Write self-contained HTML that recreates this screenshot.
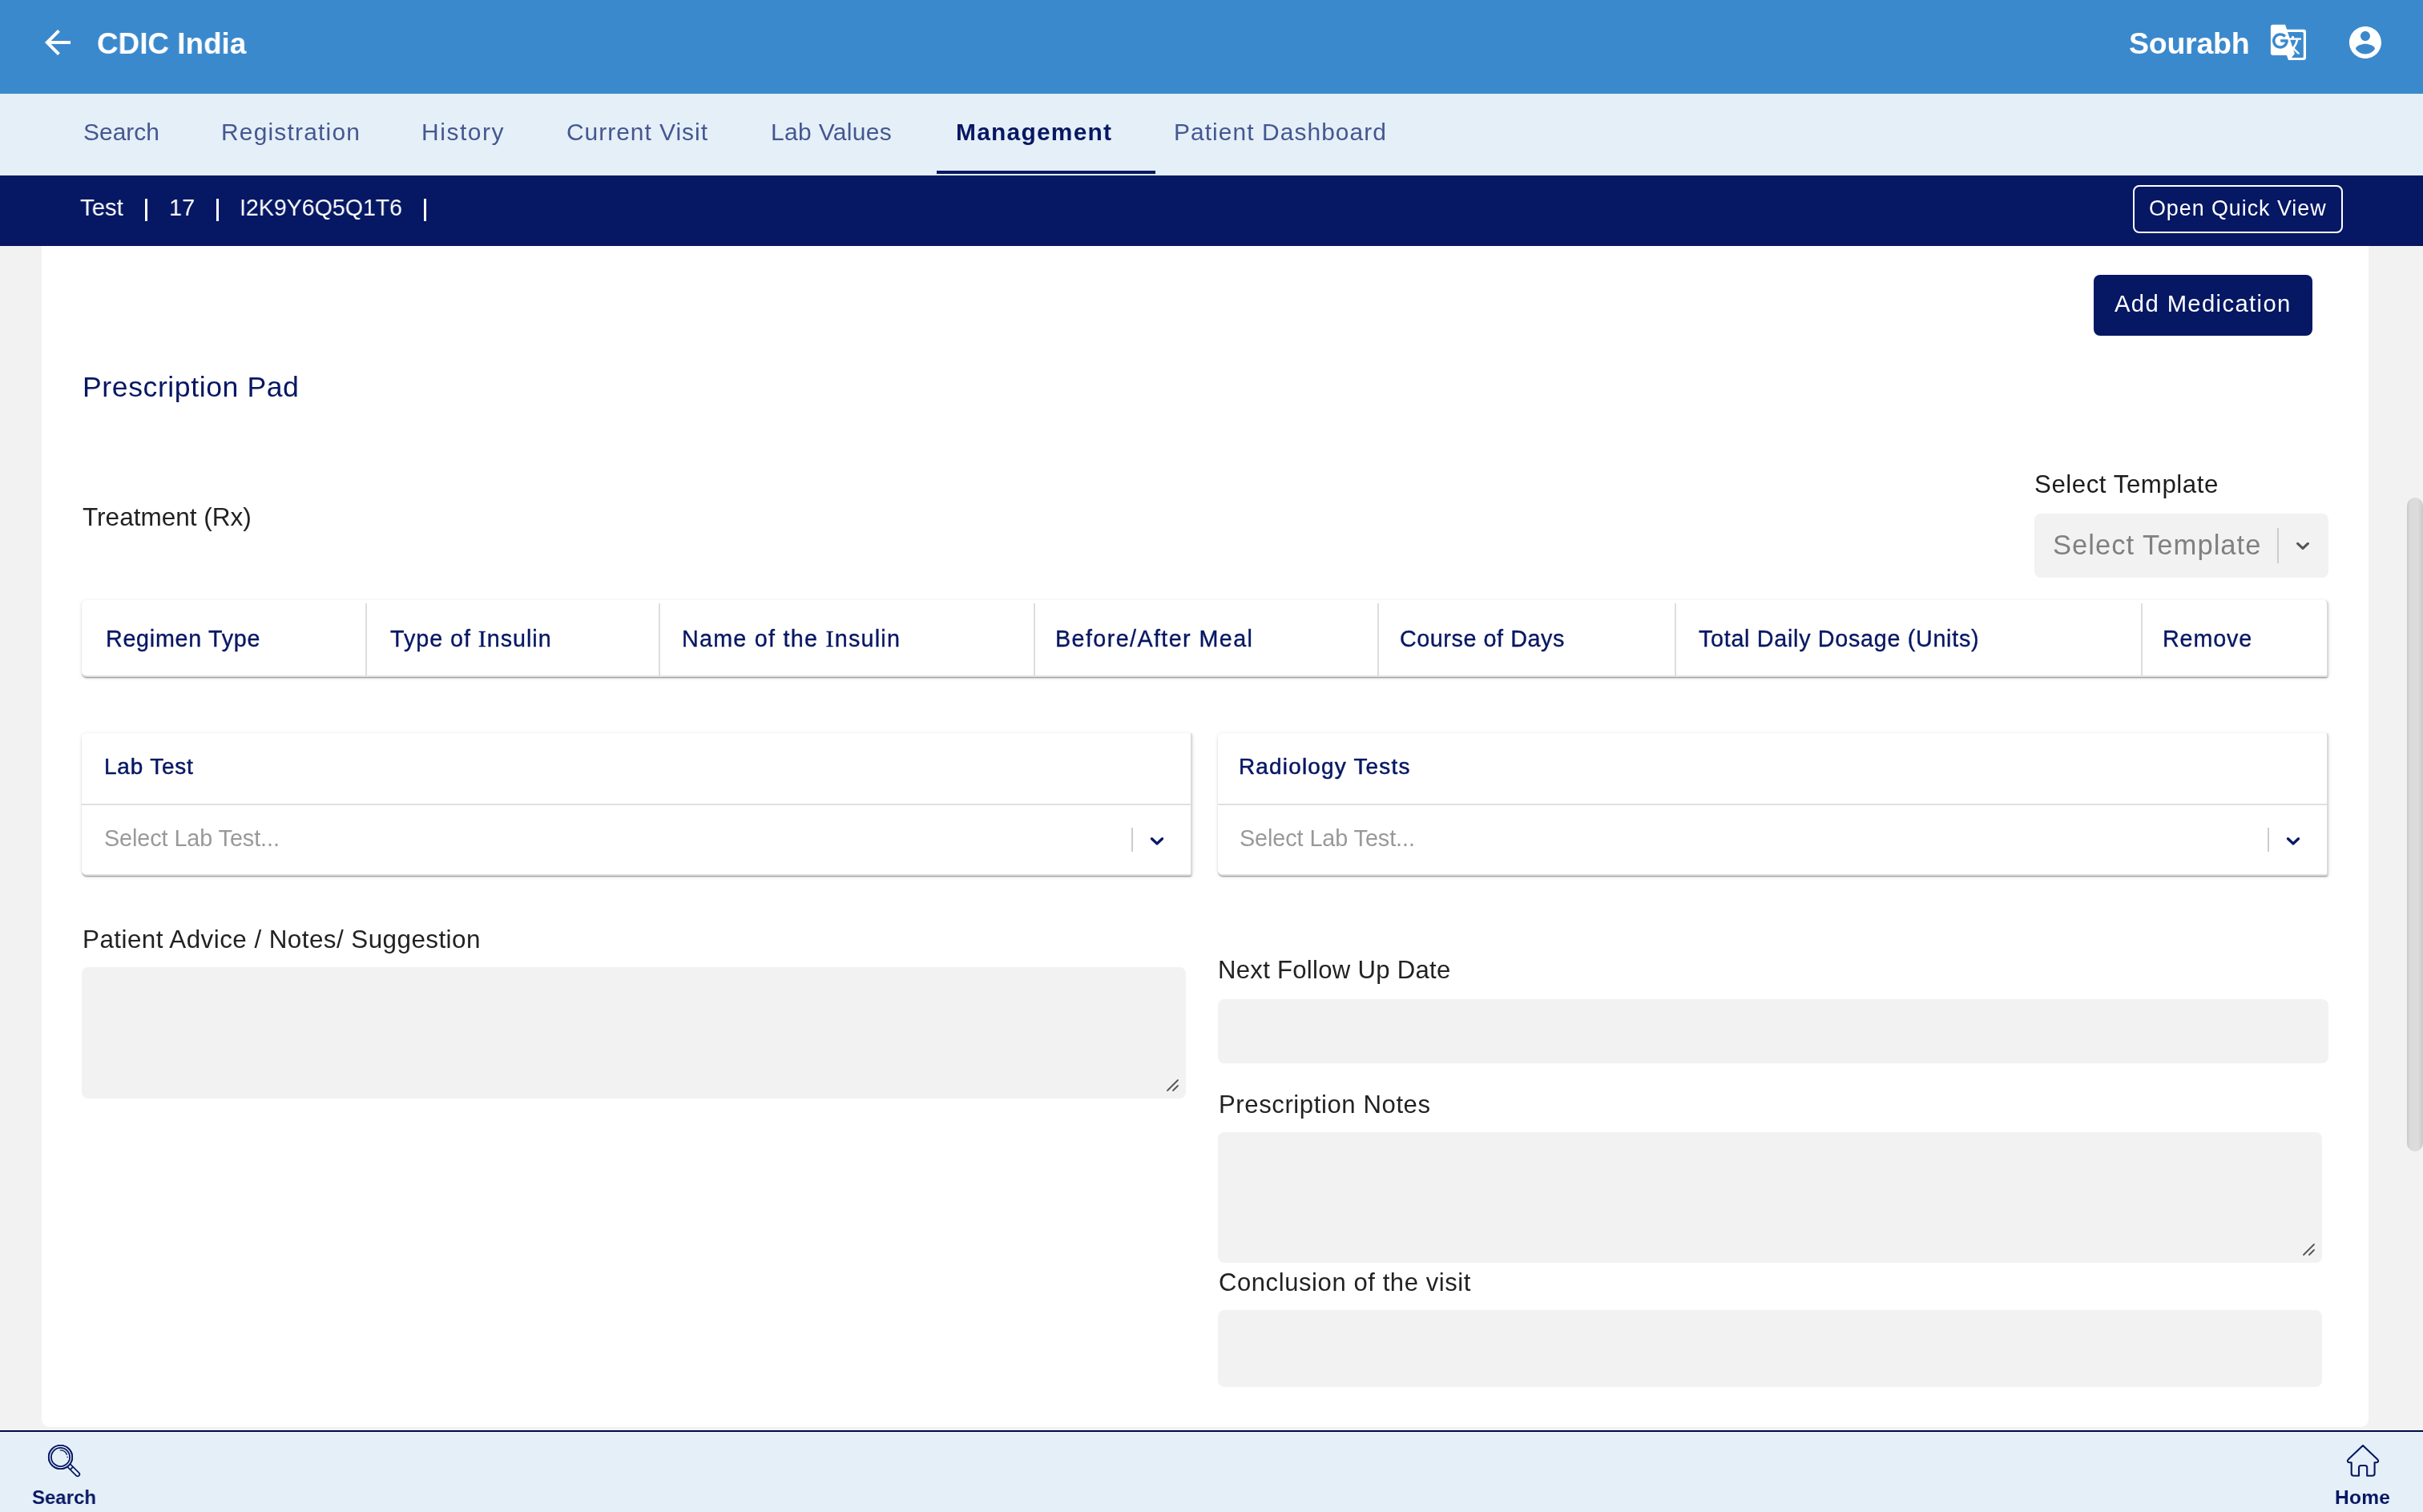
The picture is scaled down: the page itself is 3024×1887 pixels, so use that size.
<!DOCTYPE html>
<html><head><meta charset="utf-8"><title>CDIC India - Management</title>
<style>
html,body{margin:0;padding:0;width:3024px;height:1887px;overflow:hidden;background:#f2f2f2}
body{position:relative;font-family:"Liberation Sans",sans-serif}
.bx{position:absolute;box-sizing:border-box}
.tx{position:absolute;white-space:nowrap;will-change:transform}
.sI{font-family:"Liberation Serif",serif;font-size:105%;line-height:0}
</style></head><body>
<div class="bx" style="left:0px;top:0px;width:3024px;height:1887px;background:#f2f2f2"></div>
<div class="bx" style="left:52px;top:240px;width:2904px;height:1541px;background:#fff;border-radius:0 0 10px 10px"></div>
<div class="bx" style="left:3004px;top:621px;width:20px;height:816px;background:linear-gradient(90deg,#c9c9c9 0%,#dadada 20%,#dcdcdc 70%,#c9c9c9 100%);border-radius:10px"></div>
<div class="bx" style="left:0px;top:0px;width:3024px;height:117px;background:#3b89cd"></div>
<div class="bx" style="left:0px;top:117px;width:3024px;height:102px;background:#e5eff8"></div>
<div class="bx" style="left:1169px;top:213px;width:273px;height:4px;background:#061763"></div>
<div class="bx" style="left:0px;top:219px;width:3024px;height:88px;background:#061763"></div>
<div class="bx" style="left:2662px;top:231px;width:262px;height:60px;border:2px solid #fff;border-radius:8px;box-sizing:border-box"></div>
<div class="bx" style="left:181.2px;top:248px;width:3.0px;height:28px;background:#fff"></div>
<div class="bx" style="left:269.6px;top:248px;width:3.0px;height:28px;background:#fff"></div>
<div class="bx" style="left:529.0px;top:248px;width:3.0px;height:28px;background:#fff"></div>
<div class="bx" style="left:2613px;top:343px;width:273px;height:76px;background:#061763;border-radius:8px"></div>
<div class="bx" style="left:2539px;top:641px;width:367px;height:80px;background:#f2f2f2;border-radius:8px"></div>
<div class="bx" style="left:2842px;top:659px;width:2px;height:44px;background:#cccccc"></div>
<svg class="bx" style="left:2862px;top:672px" width="24" height="20" viewBox="0 0 24 20"><path d="M5.6 6.4 L12 12.4 L18.4 6.4" fill="none" stroke="#555" stroke-width="3.2" stroke-linecap="round" stroke-linejoin="round"/></svg>
<div class="bx" style="left:102px;top:749px;width:2804px;height:96px;background:#fff;border-radius:6px 5px 3px 6px;border-right:2px solid #dadada;border-bottom:2px solid #e0e0e0;box-shadow:0 2px 2px -1px rgba(0,0,0,.32),0 1px 1px 0 rgba(0,0,0,.12),0 1px 5px 0 rgba(0,0,0,.12)"></div>
<div class="bx" style="left:456px;top:753px;width:2px;height:90px;background:#dedede"></div>
<div class="bx" style="left:822px;top:753px;width:2px;height:90px;background:#dedede"></div>
<div class="bx" style="left:1290px;top:753px;width:2px;height:90px;background:#dedede"></div>
<div class="bx" style="left:1719px;top:753px;width:2px;height:90px;background:#dedede"></div>
<div class="bx" style="left:2090px;top:753px;width:2px;height:90px;background:#dedede"></div>
<div class="bx" style="left:2672px;top:753px;width:2px;height:90px;background:#dedede"></div>
<div class="bx" style="left:102px;top:915px;width:1386px;height:178px;background:#fff;border-radius:6px 3px 3px 6px;border-right:2px solid #dadada;border-bottom:2px solid #e0e0e0;box-shadow:0 2px 2px -1px rgba(0,0,0,.32),0 1px 1px 0 rgba(0,0,0,.12),0 1px 5px 0 rgba(0,0,0,.12)"></div>
<div class="bx" style="left:102px;top:1003px;width:1384px;height:2px;background:#e0e0e0"></div>
<div class="bx" style="left:1412px;top:1033px;width:2px;height:30px;background:#cccccc"></div>
<svg class="bx" style="left:1432px;top:1040px" width="24" height="20" viewBox="0 0 24 20"><path d="M5.5 6.7 L12 12.9 L18.5 6.7" fill="none" stroke="#061763" stroke-width="3.3" stroke-linecap="round" stroke-linejoin="round"/></svg>
<div class="bx" style="left:1520px;top:915px;width:1386px;height:178px;background:#fff;border-radius:6px 3px 3px 6px;border-right:2px solid #dadada;border-bottom:2px solid #e0e0e0;box-shadow:0 2px 2px -1px rgba(0,0,0,.32),0 1px 1px 0 rgba(0,0,0,.12),0 1px 5px 0 rgba(0,0,0,.12)"></div>
<div class="bx" style="left:1520px;top:1003px;width:1384px;height:2px;background:#e0e0e0"></div>
<div class="bx" style="left:2830px;top:1033px;width:2px;height:30px;background:#cccccc"></div>
<svg class="bx" style="left:2850px;top:1040px" width="24" height="20" viewBox="0 0 24 20"><path d="M5.5 6.7 L12 12.9 L18.5 6.7" fill="none" stroke="#061763" stroke-width="3.3" stroke-linecap="round" stroke-linejoin="round"/></svg>
<div class="bx" style="left:102px;top:1207px;width:1378px;height:164px;background:#f2f2f2;border-radius:8px"></div>
<div class="bx" style="left:1520px;top:1247px;width:1386px;height:80px;background:#f2f2f2;border-radius:8px"></div>
<div class="bx" style="left:1520px;top:1413px;width:1378px;height:163px;background:#f2f2f2;border-radius:8px"></div>
<div class="bx" style="left:1520px;top:1635px;width:1378px;height:96px;background:#f2f2f2;border-radius:8px"></div>
<svg class="bx" style="left:1454px;top:1345px" width="18" height="18" viewBox="0 0 18 18"><path d="M16 3 L3 16 M16 10 L10 16" stroke="#555" stroke-width="1.8" stroke-linecap="round"/></svg>
<svg class="bx" style="left:2872px;top:1550px" width="18" height="18" viewBox="0 0 18 18"><path d="M16 3 L3 16 M16 10 L10 16" stroke="#555" stroke-width="1.8" stroke-linecap="round"/></svg>
<div class="bx" style="left:0px;top:1785px;width:3024px;height:102px;background:#e5eff8;border-top:2px solid #00084d;box-sizing:border-box"></div>
<svg class="bx" style="left:48px;top:29px" width="48" height="48" viewBox="0 0 24 24"><path fill="#fff" d="M20 11H7.83l5.59-5.59L12 4l-8 8 8 8 1.41-1.41L7.83 13H20v-2z"/></svg>
<svg class="bx" style="left:2826px;top:26px" width="60" height="54" viewBox="0 0 60 54">
<path fill="#fff" d="M11 4.8 H26 L28.2 10.7 H49 A3 3 0 0 1 52 13.7 V45.9 A3 3 0 0 1 49 48.9 H30 L27.9 42.9 H10.9 A3 3 0 0 1 7.9 39.9 V7.8 A3 3 0 0 1 11 4.8 Z"/>
<path fill="#3b89cd" d="M29.1 14.1 H47.3 A1.5 1.5 0 0 1 48.8 15.6 V44.4 A1.5 1.5 0 0 1 47.3 45.9 H33.9 L37.9 41.1 Z"/>
<g stroke="#fff" fill="none">
<path d="M31 22.6 H45.9" stroke-width="2.35"/>
<path d="M35.5 19.2 V22" stroke-width="3"/>
<path d="M41 23.5 C 40.2 28, 38.5 31.5, 35 35" stroke-width="2.6"/>
<path d="M36.4 34.6 L42.6 40.6" stroke-width="2.4" stroke-linecap="round"/>
</g>
<path d="M25.8 19.5 A8.1 8.1 0 1 0 27.9 24.9" fill="none" stroke="#3b89cd" stroke-width="3.4"/>
<rect x="20.2" y="23.2" width="9.4" height="3.4" fill="#3b89cd"/>
</svg>
<svg class="bx" style="left:2928px;top:29px" width="48" height="48" viewBox="0 0 24 24"><path fill="#fff" d="M12 2C6.48 2 2 6.48 2 12s4.48 10 10 10 10-4.48 10-10S17.52 2 12 2zm0 3c1.66 0 3 1.34 3 3s-1.34 3-3 3-3-1.34-3-3 1.34-3 3-3zm0 14.2c-2.5 0-4.71-1.28-6-3.22.03-1.99 4-3.08 6-3.08 1.99 0 5.97 1.09 6 3.08-1.29 1.94-3.5 3.22-6 3.22z"/></svg>
<svg class="bx" style="left:54px;top:1797px" width="52" height="52" viewBox="0 0 52 52">
<circle cx="21.5" cy="21.5" r="14.75" fill="none" stroke="#061763" stroke-width="1.7"/>
<circle cx="21.5" cy="21.5" r="11.6" fill="none" stroke="#061763" stroke-width="1.8"/>
<path d="M21.3 12.9 A 8.7 8.7 0 0 1 29.4 18.3" fill="none" stroke="#061763" stroke-width="1.4" stroke-linecap="round"/>
<circle cx="30.2" cy="21.5" r="0.8" fill="#061763"/>
<g transform="translate(21.5 21.5) rotate(45)" fill="none" stroke="#061763" stroke-width="1.7"><path d="M15 -2.45 H30.2 A2.45 2.45 0 0 1 30.2 2.45 H15"/><path d="M19.7 -2.45 V2.45"/></g>
<circle cx="21.5" cy="21.5" r="14.75" fill="none" stroke="#061763" stroke-width="1.7"/>
</svg>
<svg class="bx" style="left:2925px;top:1799px" width="48" height="48" viewBox="0 0 48 48">
<path d="M24 5 L5.6 22.6 Q3.8 24.6 6.2 26 L9.7 26.4 V40 Q9.7 42.7 12.5 42.7 H19 V32.6 Q19 30 21.6 30 H26.6 Q29.2 30 29.2 32.6 V42.7 H35.8 Q38.6 42.7 38.6 40 V26.4 L41.8 26 Q44.2 24.6 42.4 22.6 Z" fill="none" stroke="#061763" stroke-width="2.1" stroke-linejoin="round"/>
</svg>
<div id="cdic" class="tx" style="left:120.91px;top:36.10px;font-size:37.50px;line-height:37.50px;font-weight:700;color:#fff;letter-spacing:0.000px;transform:scaleX(0.9825);transform-origin:0 0">CDIC India</div>
<div id="sourabh" class="tx" style="left:2656.80px;top:36.10px;font-size:37.50px;line-height:37.50px;font-weight:700;color:#fff;letter-spacing:-0.236px">Sourabh</div>
<div id="t1" class="tx" style="left:103.80px;top:150.21px;font-size:29.94px;line-height:29.94px;font-weight:400;color:#44578f;letter-spacing:0.020px">Search</div>
<div id="t2" class="tx" style="left:276.40px;top:150.21px;font-size:29.94px;line-height:29.94px;font-weight:400;color:#44578f;letter-spacing:1.196px">Registration</div>
<div id="t3" class="tx" style="left:526.00px;top:150.21px;font-size:29.94px;line-height:29.94px;font-weight:400;color:#44578f;letter-spacing:1.571px">History</div>
<div id="t4" class="tx" style="left:707.40px;top:150.21px;font-size:29.94px;line-height:29.94px;font-weight:400;color:#44578f;letter-spacing:0.983px">Current Visit</div>
<div id="t5" class="tx" style="left:962.00px;top:150.21px;font-size:29.94px;line-height:29.94px;font-weight:400;color:#44578f;letter-spacing:0.361px">Lab Values</div>
<div id="t6" class="tx" style="left:1192.50px;top:150.21px;font-size:29.94px;line-height:29.94px;font-weight:700;color:#061763;letter-spacing:1.221px">Management</div>
<div id="t7" class="tx" style="left:1465.00px;top:150.21px;font-size:29.94px;line-height:29.94px;font-weight:400;color:#44578f;letter-spacing:1.062px">Patient Dashboard</div>
<div id="d1" class="tx" style="left:100.21px;top:244.31px;font-size:29.94px;line-height:29.94px;font-weight:400;color:#fff;letter-spacing:0.000px;transform:scaleX(0.9818);transform-origin:0 0">Test</div>
<div id="d2" class="tx" style="left:211.27px;top:244.31px;font-size:29.94px;line-height:29.94px;font-weight:400;color:#fff;letter-spacing:0.000px;transform:scaleX(0.9632);transform-origin:0 0">17</div>
<div id="d3" class="tx" style="left:298.83px;top:244.31px;font-size:29.94px;line-height:29.94px;font-weight:400;color:#fff;letter-spacing:0.000px;transform:scaleX(0.9532);transform-origin:0 0">I2K9Y6Q5Q1T6</div>
<div id="oqv" class="tx" style="left:2682.20px;top:247.11px;font-size:26.89px;line-height:26.89px;font-weight:400;color:#fff;letter-spacing:0.960px">Open Quick View</div>
<div id="addm" class="tx" style="left:2638.70px;top:365.00px;font-size:29.22px;line-height:29.22px;font-weight:400;color:#fff;letter-spacing:1.380px">Add Medication</div>
<div id="ppad" class="tx" style="left:102.50px;top:466.11px;font-size:35.61px;line-height:35.61px;font-weight:400;color:#061763;letter-spacing:0.577px">Prescription Pad</div>
<div id="trx" class="tx" style="left:102.80px;top:629.81px;font-size:31.54px;line-height:31.54px;font-weight:400;color:#222;letter-spacing:-0.000px">Treatment (Rx)</div>
<div id="stl" class="tx" style="left:2539.00px;top:588.91px;font-size:31.25px;line-height:31.25px;font-weight:400;color:#1c1c1c;letter-spacing:0.540px">Select Template</div>
<div id="stp" class="tx" style="left:2561.70px;top:662.80px;font-size:34.59px;line-height:34.59px;font-weight:400;color:#808080;letter-spacing:0.999px">Select Template</div>
<div id="h1" class="tx" style="left:132.20px;top:782.93px;font-size:28.71px;line-height:28.71px;font-weight:400;color:#061763;letter-spacing:0.711px;-webkit-text-stroke:0.35px #061763">Regimen Type</div>
<div id="h2" class="tx" style="left:486.80px;top:782.93px;font-size:28.71px;line-height:28.71px;font-weight:400;color:#061763;letter-spacing:0.966px;-webkit-text-stroke:0.35px #061763">Type of <span class="sI">I</span>nsulin</div>
<div id="h3" class="tx" style="left:851.00px;top:782.93px;font-size:28.71px;line-height:28.71px;font-weight:400;color:#061763;letter-spacing:1.255px;-webkit-text-stroke:0.35px #061763">Name of the <span class="sI">I</span>nsulin</div>
<div id="h4" class="tx" style="left:1317.40px;top:782.93px;font-size:28.71px;line-height:28.71px;font-weight:400;color:#061763;letter-spacing:1.408px;-webkit-text-stroke:0.35px #061763">Before/After Meal</div>
<div id="h5" class="tx" style="left:1747.20px;top:782.93px;font-size:28.71px;line-height:28.71px;font-weight:400;color:#061763;letter-spacing:0.573px;-webkit-text-stroke:0.35px #061763">Course of Days</div>
<div id="h6" class="tx" style="left:2120.00px;top:782.93px;font-size:28.71px;line-height:28.71px;font-weight:400;color:#061763;letter-spacing:0.708px;-webkit-text-stroke:0.35px #061763">Total Daily Dosage (Units)</div>
<div id="h7" class="tx" style="left:2699.20px;top:782.93px;font-size:28.71px;line-height:28.71px;font-weight:400;color:#061763;letter-spacing:0.860px;-webkit-text-stroke:0.35px #061763">Remove</div>
<div id="lt" class="tx" style="left:130.10px;top:943.46px;font-size:27.91px;line-height:27.91px;font-weight:400;color:#061763;letter-spacing:0.840px;-webkit-text-stroke:0.5px #061763">Lab Test</div>
<div id="rt" class="tx" style="left:1546.40px;top:943.46px;font-size:27.91px;line-height:27.91px;font-weight:400;color:#061763;letter-spacing:1.207px;-webkit-text-stroke:0.5px #061763">Radiology Tests</div>
<div id="slt1" class="tx" style="left:129.70px;top:1031.80px;font-size:28.78px;line-height:28.78px;font-weight:400;color:#999;letter-spacing:-0.072px">Select Lab Test...</div>
<div id="slt2" class="tx" style="left:1547.40px;top:1031.80px;font-size:28.78px;line-height:28.78px;font-weight:400;color:#999;letter-spacing:-0.072px">Select Lab Test...</div>
<div id="pa" class="tx" style="left:102.50px;top:1156.91px;font-size:31.40px;line-height:31.40px;font-weight:400;color:#222;letter-spacing:0.448px">Patient Advice / Notes/ Suggestion</div>
<div id="nf" class="tx" style="left:1520.00px;top:1194.80px;font-size:31.10px;line-height:31.10px;font-weight:400;color:#222;letter-spacing:0.286px">Next Follow Up Date</div>
<div id="pn" class="tx" style="left:1520.50px;top:1362.80px;font-size:31.10px;line-height:31.10px;font-weight:400;color:#222;letter-spacing:0.589px">Prescription Notes</div>
<div id="cv" class="tx" style="left:1520.60px;top:1585.81px;font-size:30.96px;line-height:30.96px;font-weight:400;color:#222;letter-spacing:0.608px">Conclusion of the visit</div>
<div id="bs" class="tx" style="left:40.02px;top:1856.80px;font-size:24.42px;line-height:24.42px;font-weight:700;color:#061763;letter-spacing:0.000px;transform:scaleX(0.9824);transform-origin:0 0">Search</div>
<div id="bh" class="tx" style="left:2913.50px;top:1856.90px;font-size:24.56px;line-height:24.56px;font-weight:700;color:#061763;letter-spacing:0.204px">Home</div>
</body></html>
